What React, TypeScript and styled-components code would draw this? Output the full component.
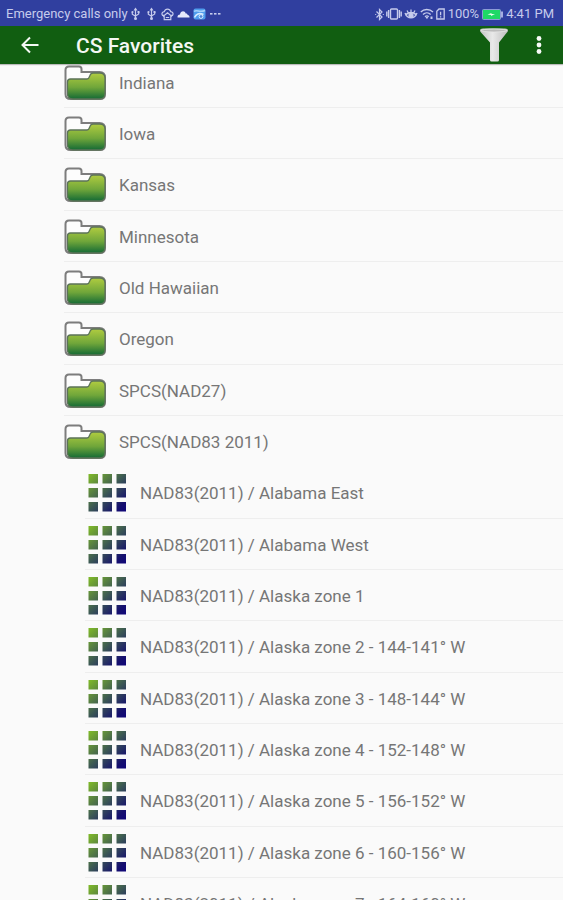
import React from "react";
import styled, { createGlobalStyle } from "styled-components";

const GlobalStyle = createGlobalStyle`
  * { box-sizing: border-box; }
  body {
    margin: 0;
    background: #fafafa;
    font-family: Roboto, "Noto Sans", sans-serif;
  }
`;

const Screen = styled.div`
  display: flex;
  flex-direction: column;
  height: 100vh;
  overflow: hidden;
  background: #fafafa;
`;

const StatusBar = styled.div`
  display: flex;
  flex: none;
  align-items: center;
  justify-content: space-between;
  height: 26px;
  padding: 2px 9px 0 6px;
  background: #303f9f;
  color: #c6cbec;
  font-size: 13px;
  line-height: 16px;
  white-space: nowrap;
`;

const StatusGroup = styled.div<{ $gap: number }>`
  display: flex;
  align-items: center;
  gap: ${(p) => p.$gap}px;
  svg { display: block; flex: none; }
`;

const NoticeSlot = styled.span`
  display: flex;
  justify-content: center;
  width: 16px;
`;

const Toolbar = styled.header`
  position: relative;
  z-index: 1;
  display: flex;
  flex: none;
  align-items: center;
  height: 38px;
  padding: 0 12px 0 18px;
  background: #115e11;
  box-shadow: 0 1px 1px rgba(0, 0, 0, 0.25);
`;

const Title = styled.h1`
  flex: 1;
  margin: 2px 0 0 34px;
  color: #f4f8f4;
  font-size: 21px;
  font-weight: 500;
  line-height: 24px;
`;

const Actions = styled.div`
  display: flex;
  align-items: center;
  gap: 12px;
`;

const IconButton = styled.button<{ $width: number }>`
  display: flex;
  align-items: center;
  justify-content: center;
  width: ${(p) => p.$width}px;
  height: 38px;
  padding: 0;
  border: 0;
  background: none;
  cursor: pointer;
`;

const ListViewport = styled.main`
  flex: 1;
  min-height: 0;
  overflow: hidden;
`;

const List = styled.ul`
  margin: -7px 0 0;
  padding: 0;
  list-style: none;
`;

const Row = styled.li<{ $nested: boolean; $divider: boolean }>`
  height: 51px;
  margin-left: ${(p) => (p.$nested ? 85 : 64)}px;
  border-bottom: 1px solid ${(p) => (p.$divider ? "#eeeeee" : "transparent")};
  &:nth-child(3n) { height: 52px; }
`;

const RowButton = styled.button<{ $nested: boolean }>`
  display: flex;
  align-items: center;
  gap: ${(p) => (p.$nested ? 13 : 12)}px;
  width: 100%;
  height: 100%;
  padding: 1px 0 0 ${(p) => (p.$nested ? 3 : 0)}px;
  border: 0;
  background: none;
  color: #767676;
  font-family: inherit;
  font-size: 17px;
  line-height: 24px;
  text-align: left;
  white-space: nowrap;
  cursor: pointer;
  svg { display: block; flex: none; }
`;

const UsbIcon = () => (
  <svg width="9" height="14" viewBox="0 0 9 14" fill="none" stroke="currentColor" strokeWidth="1.2">
    <path d="M4.5 2v9M1.3 5v2.2l3.2 2M7.7 5v2l-3.2 2" />
    <path d="M4.5 .5 6.5 3.5h-4z" fill="currentColor" stroke="none" />
    <circle cx="1.5" cy="5" r="1.1" fill="currentColor" stroke="none" />
    <path d="M6.5 4h2v2h-2z" fill="currentColor" stroke="none" />
    <circle cx="4.5" cy="11.5" r="1.5" fill="currentColor" stroke="none" />
  </svg>
);

const HouseIcon = () => (
  <svg width="13" height="13" viewBox="0 0 13 13" fill="none" stroke="currentColor" strokeWidth="1.2">
    <path d="M3 7.300H1.500C.2 5.500 1.500 3.800 3.300 3.700 4.300.3 8.700.3 9.700 3.700c1.800.1 3.100 1.800 1.800 3.600H10" />
    <path d="M2 8.500 6.500 4.700 11 8.500M3.200 8v3.700h6.600V8M4.800 9.500h3.400" />
  </svg>
);

const CloudIcon = () => (
  <svg width="13" height="8" viewBox="0 0 13 8" fill="#e6e9fb">
    <path d="M.5 7.500C.3 5.500 1.500 4.500 3 4.500 3.500.3 8 .2 8.700 3.500c1.200-.2 1.800.5 2 1.500 1.300.2 1.900 1 1.900 2.500z" />
  </svg>
);

const PhotoIcon = () => (
  <svg width="13" height="12" viewBox="0 0 13 12">
    <rect x=".5" y=".5" width="12" height="11" rx="2" fill="#4f9ded" />
    <path d="M1 3.500C4 1 6 5 12 2.500" fill="none" stroke="#a7d2fa" strokeWidth="1.500" />
    <path d="M1.500 9.500C3 6 6 4.500 10.500 6.500" fill="none" stroke="#d7ecff" strokeWidth="1.600" />
    <circle cx="8" cy="8.500" r="1.900" fill="#4f86d8" stroke="#d7ecff" />
  </svg>
);

const MoreDots = () => (
  <svg width="11" height="4" viewBox="0 0 11 4" fill="currentColor">
    <rect y="1" width="2.500" height="1.600" />
    <rect x="4" y="1" width="2.500" height="1.600" />
    <rect x="8" y="1" width="2.500" height="1.600" />
  </svg>
);

const BluetoothIcon = () => (
  <svg width="9" height="13" viewBox="0 0 9 13" fill="none" stroke="currentColor" strokeWidth="1.200">
    <path d="M1.500 3.500 7 9 4.500 11.500v-10L7 4 1.500 9.500" />
    <path d="M.2 6.500h1M7.800 6.500h1" />
  </svg>
);

const VibrateIcon = () => (
  <svg width="16" height="12" viewBox="0 0 16 12" fill="none" stroke="currentColor" strokeWidth="1.400">
    <rect x="4.500" y="1" width="7" height="10" rx="1" />
    <path d="M2.600 2v8M.8 3.500v5M13.400 2v8M15.200 3.500v5" />
  </svg>
);

const EyeIcon = () => (
  <svg width="14" height="12" viewBox="0 0 14 12" fill="none" stroke="currentColor" strokeWidth="1.300">
    <path d="M1 5C3.500 11.500 10.500 11.500 13 5M1.500 7.500C4 3.500 10 3.500 12.500 7.500M3 2.500l1.200 2M7 1.500V4M11 2.500l-1.200 2" />
    <circle cx="7" cy="7.300" r="2" fill="currentColor" />
  </svg>
);

const WifiIcon = () => (
  <svg width="14" height="12" viewBox="0 0 14 12" fill="none" stroke="currentColor" strokeWidth="1.400">
    <path d="M.8 4C4 .7 9.500.7 13 4M3 6.500c2.200-2.200 5.500-2.200 7.700 0M5 8.700c1.200-1 2.700-1 3.700 0" />
    <path d="M5.500 9h2.700L7 11.200zM10.500 8.500h2v2.500h-2z" fill="currentColor" stroke="none" />
  </svg>
);

const SimIcon = () => (
  <svg width="9" height="12" viewBox="0 0 9 12" fill="none" stroke="currentColor" strokeWidth="1.300">
    <path d="M.8 3.200 3 1h5.200v10H.8zM4.600 3.800v3.400M4.600 8.200v1.300" />
  </svg>
);

const BatteryIcon = () => (
  <svg width="21" height="11" viewBox="0 0 21 11">
    <rect x=".5" y=".5" width="18" height="10" rx="1" fill="#1fd866" stroke="#8d9bd6" />
    <path d="M19 2.500h2v6h-2z" fill="#a5afe0" />
    <path d="M5.500 5.500 9.500 4v1H13L9 7V6z" fill="#e9fff0" />
  </svg>
);

const BackIcon = () => (
  <svg width="20" height="18" viewBox="0 0 20 18" fill="none" stroke="#f4f8f4" strokeWidth="2">
    <path d="M18.500 9H3M10 1.500 2.500 9l7.500 7.500" />
  </svg>
);

const FunnelIcon = () => (
  <svg width="30" height="36" viewBox="0 0 30 36">
    <defs>
      <linearGradient id="funnel" x1="0" x2="1">
        <stop offset="0" stopColor="#c4c4c4" />
        <stop offset=".45" stopColor="#e9e9e9" />
        <stop offset="1" stopColor="#bdbdbd" />
      </linearGradient>
    </defs>
    <path
      d="M1 3.500Q1 1.500 4 1.500h22q3 0 3 2 0 1.200-1.500 2.500L20 15.500V33q0 1.500-1.500 1.500h-6Q11 34.500 11 33V15.500L2.500 6Q1 4.700 1 3.500z"
      fill="url(#funnel)"
    />
    <ellipse cx="15" cy="3.500" rx="13" ry="1.500" fill="#bcbcbc" stroke="#e6e6e6" strokeWidth=".8" />
  </svg>
);

const OverflowIcon = () => (
  <svg width="6" height="20" viewBox="0 0 6 20" fill="#f8fbf8">
    <circle cx="3" cy="3.500" r="2.400" />
    <circle cx="3" cy="10" r="2.400" />
    <circle cx="3" cy="16.500" r="2.400" />
  </svg>
);

const FolderIcon = () => (
  <svg width="43" height="36" viewBox="0 0 43 36">
    <path
      d="M1.500 5q0-3.500 3.500-3.500h10q2.500 0 2.500 2.500v3h18q5.500 0 5.500 5.500V29q0 5-5 5H6.500q-5 0-5-5z"
      fill="#fdfdfd" stroke="#7d7d7d" strokeWidth="2"
    />
    <path
      d="M3.500 17q0-3 3-3H23q1.700 0 2.200-1.800l.8-2Q26.700 8 29 8h6.500q5.500 0 5.500 5v15.500q0 5.500-5.500 5.500H9q-5.500 0-5.500-5z"
      fill="url(#folderGreen)" stroke="#5c7358" strokeWidth="1.300"
    />
  </svg>
);

const GridIcon = () => (
  <svg width="39" height="38" viewBox="0 0 39 38" fill="url(#gridBlend)">
    <path d="M.5 0h9.500v9.500h-9.500zM14.500 0h9.500v9.500h-9.500zM28.500 0h9.500v9.500h-9.500zM.5 14h9.500v9.500h-9.500zM14.500 14h9.500v9.500h-9.500zM28.500 14h9.500v9.500h-9.500zM.5 28h9.500v9.500h-9.500zM14.500 28h9.500v9.500h-9.500zM28.500 28h9.500v9.500h-9.500z" />
  </svg>
);

const IconPaints = styled.svg`
  position: absolute;
`;

const folders = [
  "Indiana",
  "Iowa",
  "Kansas",
  "Minnesota",
  "Old Hawaiian",
  "Oregon",
  "SPCS(NAD27)",
  "SPCS(NAD83 2011)",
];

const systems = [
  "Alabama East",
  "Alabama West",
  "Alaska zone 1",
  "Alaska zone 2 - 144-141° W",
  "Alaska zone 3 - 148-144° W",
  "Alaska zone 4 - 152-148° W",
  "Alaska zone 5 - 156-152° W",
  "Alaska zone 6 - 160-156° W",
  "Alaska zone 7 - 164-160° W",
];

const notices = [UsbIcon, UsbIcon, HouseIcon, CloudIcon, PhotoIcon, MoreDots];

export default function App() {
  return (
    <Screen>
      <GlobalStyle />
      <IconPaints width="0" height="0" aria-hidden="true">
        <defs>
          <linearGradient id="folderGreen" x1="0" y1="0" x2="0" y2="1">
            <stop offset="0" stopColor="#b0cc40" />
            <stop offset=".55" stopColor="#70a63a" />
            <stop offset="1" stopColor="#146a35" />
          </linearGradient>
          <linearGradient id="gridBlend" x1="0" y1="0" x2="1" y2="1">
            <stop offset="0" stopColor="#80bb28" />
            <stop offset=".5" stopColor="#3b5754" />
            <stop offset=".85" stopColor="#15106e" />
            <stop offset="1" stopColor="#10067a" />
          </linearGradient>
        </defs>
      </IconPaints>
      <StatusBar>
        <StatusGroup $gap={0}>
          <span>Emergency calls only</span>
          {notices.map((Notice, i) => (
            <NoticeSlot key={i}><Notice /></NoticeSlot>
          ))}
        </StatusGroup>
        <StatusGroup $gap={3}>
          <StatusGroup $gap={2}>
            <BluetoothIcon />
            <VibrateIcon />
            <EyeIcon />
            <WifiIcon />
            <SimIcon />
          </StatusGroup>
          <span>100%</span>
          <BatteryIcon />
          <span>4:41 PM</span>
        </StatusGroup>
      </StatusBar>
      <Toolbar>
        <IconButton $width={24} aria-label="Back"><BackIcon /></IconButton>
        <Title>CS Favorites</Title>
        <Actions>
          <IconButton $width={42} aria-label="Filter"><FunnelIcon /></IconButton>
          <IconButton $width={24} aria-label="More options"><OverflowIcon /></IconButton>
        </Actions>
      </Toolbar>
      <ListViewport>
        <List>
          {folders.map((name, i) => (
            <Row key={name} $nested={false} $divider={i < folders.length - 1}>
              <RowButton $nested={false}>
                <FolderIcon />
                {name}
              </RowButton>
            </Row>
          ))}
          {systems.map((name) => (
            <Row key={name} $nested $divider>
              <RowButton $nested>
                <GridIcon />
                {`NAD83(2011) / ${name}`}
              </RowButton>
            </Row>
          ))}
        </List>
      </ListViewport>
    </Screen>
  );
}
